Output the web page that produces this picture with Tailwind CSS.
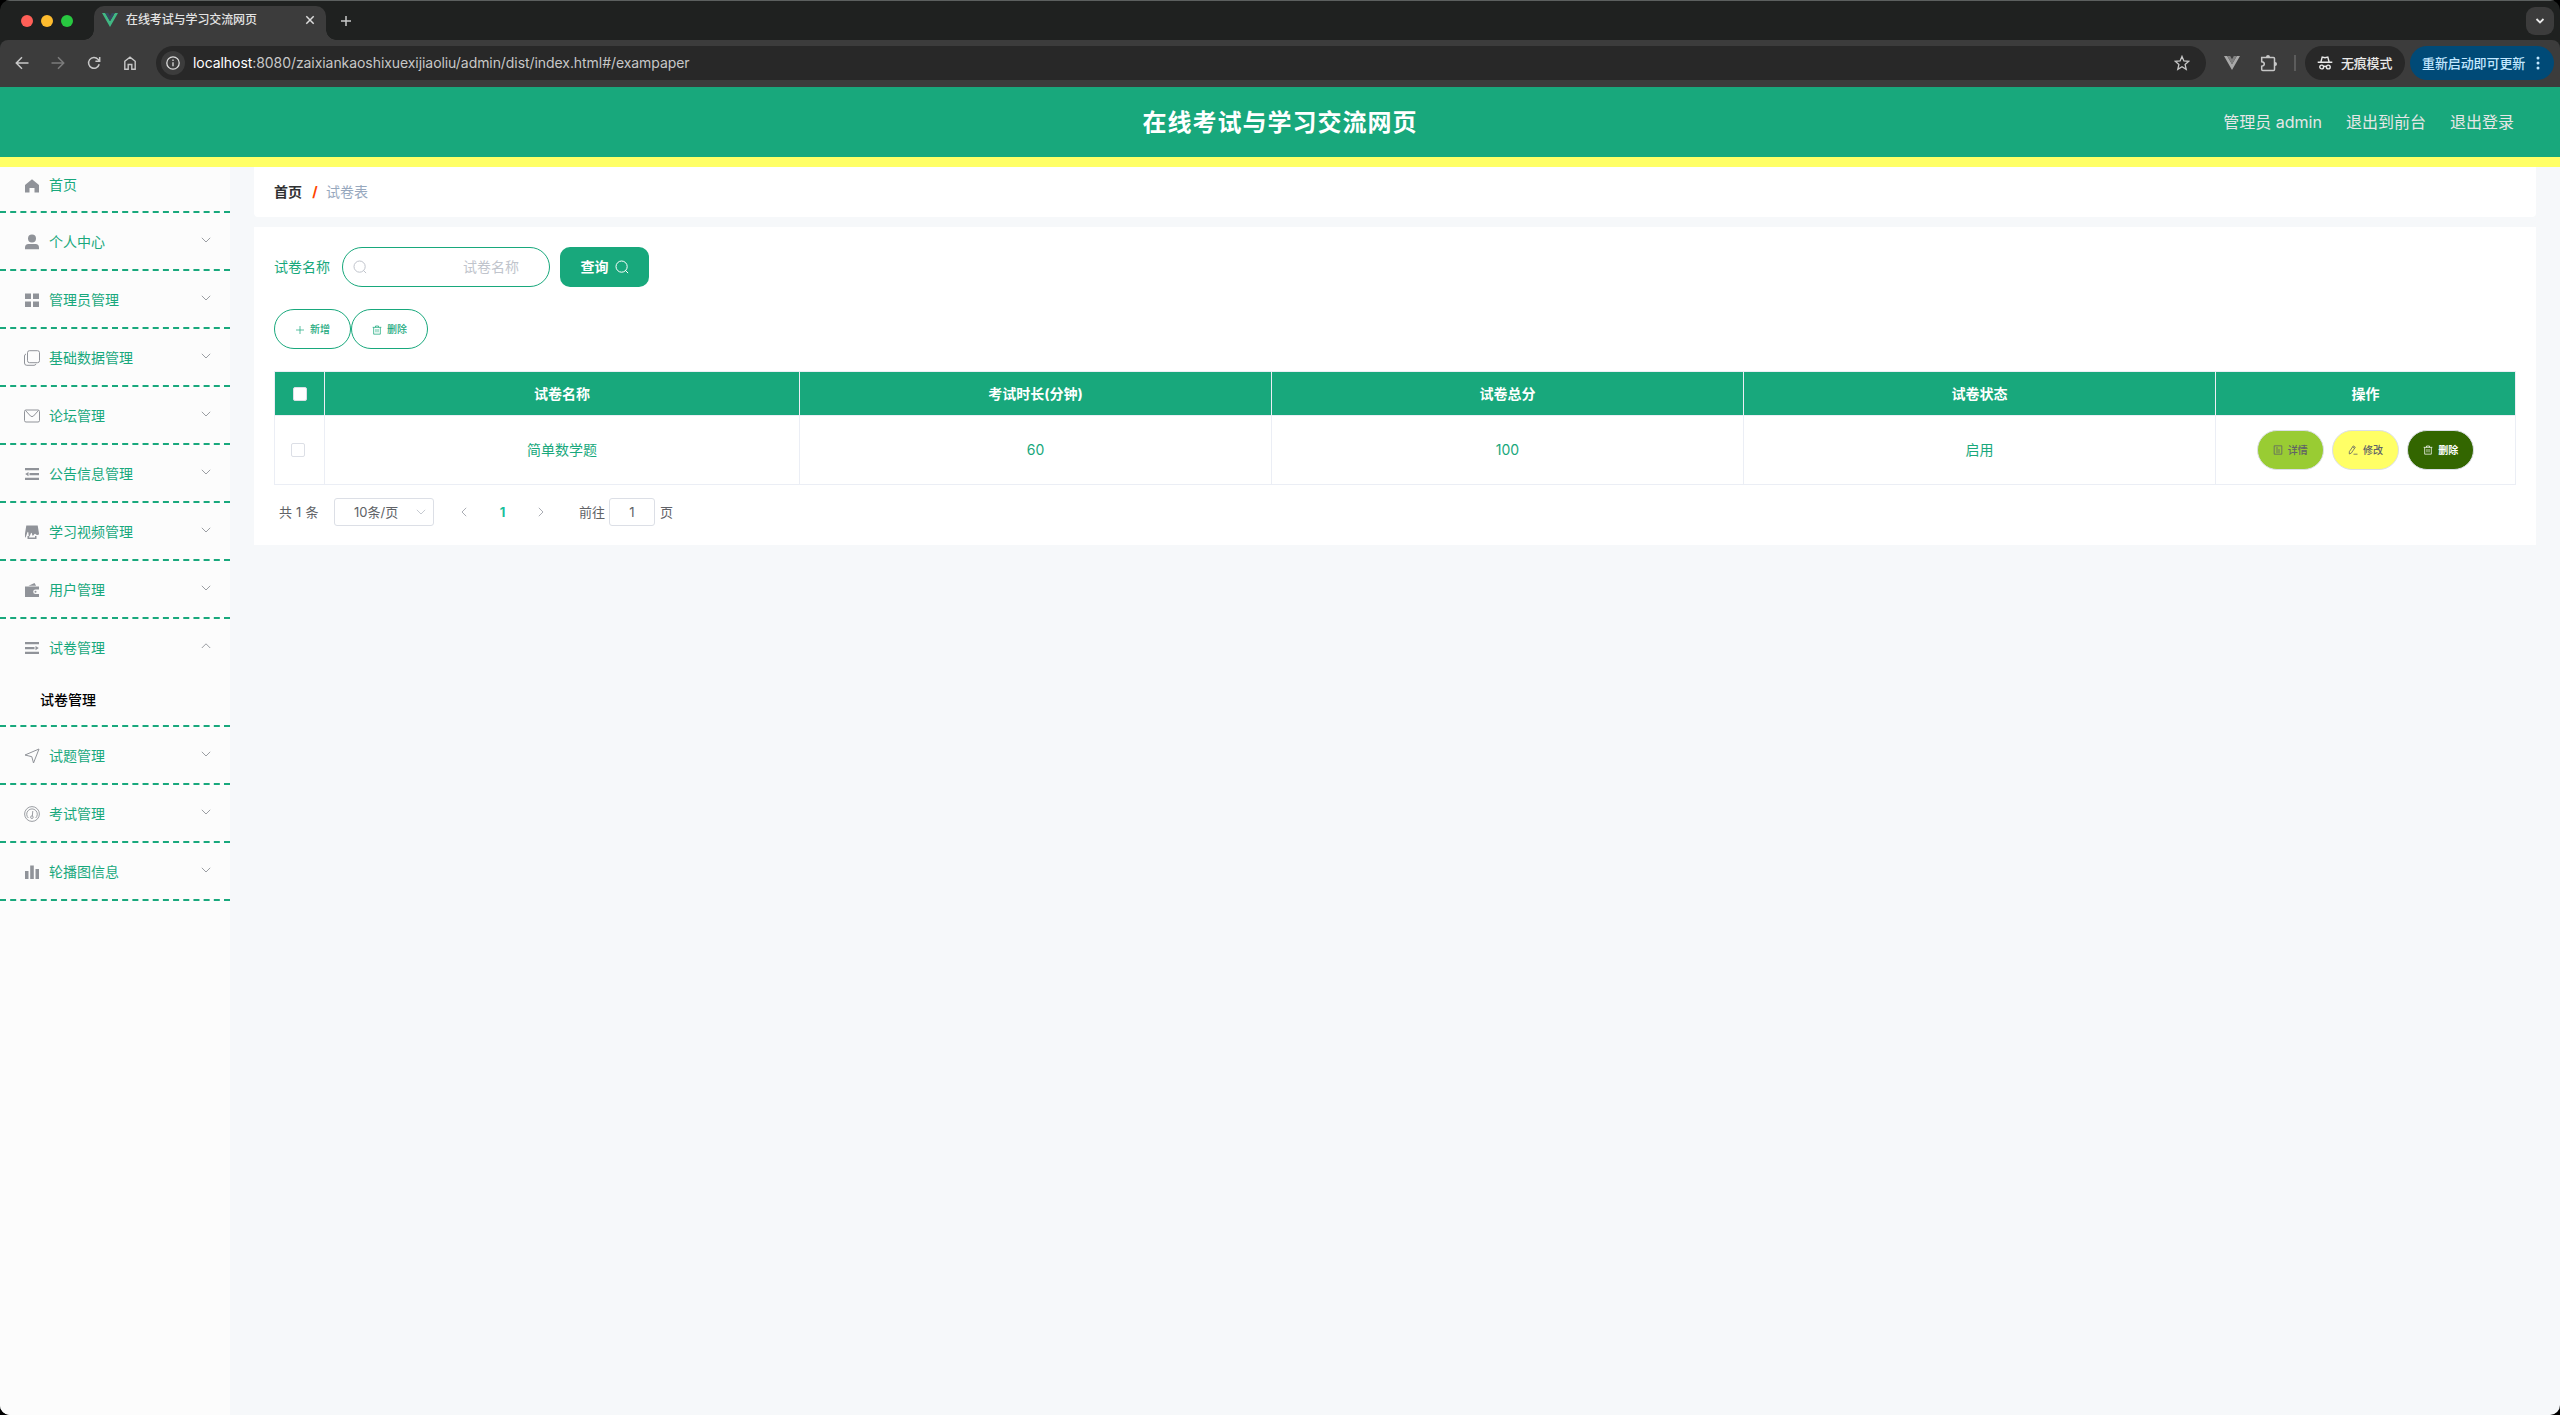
<!DOCTYPE html>
<html lang="zh-CN">
<head>
<meta charset="utf-8">
<title>在线考试与学习交流网页</title>
<script src="https://cdn.jsdelivr.net/npm/@tailwindcss/browser@4"></script>
</head>
<body class="w-[2560px] h-[1415px] overflow-hidden bg-black font-['Inter','Noto_Sans_CJK_SC',sans-serif] text-sm">
<svg class="hidden">
  <symbol id="down" viewBox="0 0 12 12"><path d="M1.8 3.8L6 8l4.2-4.2" fill="none" stroke="currentColor" stroke-width=".9"/></symbol>
  <symbol id="up" viewBox="0 0 12 12"><path d="M1.8 8L6 3.8 10.2 8" fill="none" stroke="currentColor" stroke-width=".9"/></symbol>
  <symbol id="search" viewBox="0 0 14 14"><g fill="none" stroke="currentColor" stroke-width="1"><circle cx="6.6" cy="6.6" r="5.6"/><path d="M10.200 10.200l2.900 2.900"/></g></symbol>
  <symbol id="trash" viewBox="0 0 12 12"><path d="M.8 2.800h10.400M4.200 2.800V1.200h3.600v1.600M2 2.800v8.200h8V2.800" fill="none" stroke="currentColor" stroke-width=".9"/><path d="M4.500 4.800v4M6 4.800v4M7.500 4.800v4" fill="none" stroke="currentColor" stroke-width=".6"/></symbol>
</svg>
<div class="flex h-[1415px] flex-col overflow-hidden rounded-[10px] bg-[#1f2120]">
  <!-- tab strip -->
  <div class="flex h-10 shrink-0 items-end border-t border-[#5c605f]">
    <div class="flex h-full w-[84px] items-center gap-2 pl-[21px]">
      <i class="size-3 rounded-full bg-[#ff5f57]"></i><i class="size-3 rounded-full bg-[#febc2e]"></i><i class="size-3 rounded-full bg-[#28c840]"></i>
    </div>
    <div class="size-[10px] bg-[radial-gradient(circle_at_0_0,transparent_9.5px,#3c3c3c_10px)]"></div>
    <div class="flex h-[34px] w-[232px] items-center rounded-t-[10px] bg-[#3c3c3c] pb-[6px] pl-2 pr-[11px]">
      <svg class="h-[14px] w-4" viewBox="0 0 16 14"><path d="M0 0h3.2L8 8.3 12.8 0H16L8 14z" fill="#41b883"/><path d="M3.2 0h3L8 3.2 9.800 0h3L8 8.300z" fill="#35495e"/></svg>
      <span class="ml-2 flex-1 text-[12px] font-medium leading-4 tracking-[-0.1px] text-[#e3e3e3]">在线考试与学习交流网页</span>
      <svg class="size-[10px]" viewBox="0 0 10 10"><path d="M1.300 1.300l7.400 7.400M8.700 1.300L1.300 8.700" stroke="#dcdcdc" stroke-width="1.500"/></svg>
    </div>
    <div class="size-[10px] bg-[radial-gradient(circle_at_100%_0,transparent_9.5px,#3c3c3c_10px)]"></div>
    <div class="flex h-full flex-1 items-center justify-between pl-[4px] pr-[6px]">
      <svg class="size-3" viewBox="0 0 12 12"><path d="M6 1v10M1 6h10" stroke="#c7c7c7" stroke-width="1.500"/></svg>
      <div class="flex size-7 items-center justify-center rounded-[9px] bg-[#3c3c3c]"><svg class="size-[10px]" viewBox="0 0 10 10"><path d="M1.500 3L5 6.500 8.500 3" fill="none" stroke="#e8e8e8" stroke-width="1.800"/></svg></div>
    </div>
  </div>
  <!-- toolbar -->
  <div class="flex h-[47px] shrink-0 items-center rounded-t-[8px] bg-[#3c3c3c] pb-px pl-[15px] pr-[6px]">
    <div class="flex w-[141px] items-center gap-[22px] text-[#c7c7c7]">
      <svg class="size-[14px]" viewBox="0 0 14 14"><path d="M13.500 7H1.500M7 1.300L1.300 7 7 12.700" fill="none" stroke="currentColor" stroke-width="1.500"/></svg>
      <svg class="size-[14px] text-[#7b7b7b]" viewBox="0 0 14 14"><path d="M.5 7h12M7 1.300L12.700 7 7 12.700" fill="none" stroke="currentColor" stroke-width="1.500"/></svg>
      <svg class="size-[14px]" viewBox="0 0 14 14"><path d="M12.200 8.300A5.400 5.400 0 1 1 11 3.300L12.500 4.800M12.700 1v4.300H8.400" fill="none" stroke="currentColor" stroke-width="1.500"/></svg>
      <svg class="size-[14px]" viewBox="0 0 14 14"><path d="M1.800 5.300L7 1.200l5.200 4.100v8H8.800V8.500H5.200v4.800H1.800z" fill="none" stroke="currentColor" stroke-width="1.400"/></svg>
    </div>
    <div class="flex h-[34px] flex-1 items-center rounded-full bg-[#282828] pl-[5px] pr-4">
      <div class="flex size-6 items-center justify-center rounded-full bg-[#3c3c3c]"><svg class="size-[14px]" viewBox="0 0 14 14"><g fill="none" stroke="#dcdcdc" stroke-width="1.300"><circle cx="7" cy="7" r="6.200"/><path d="M7 6.200v4M7 3.600v1.400"/></g></svg></div>
      <span class="ml-2 flex-1 text-[14px] leading-5 text-[#c7c7c7] tracking-[-0.065px]"><span class="text-white">localhost</span>:8080/zaixiankaoshixuexijiaoliu/admin/dist/index.html#/exampaper</span>
      <svg class="size-4" viewBox="0 0 16 16"><path d="M8 1.400l1.900 4.500 4.900.4-3.700 3.200 1.100 4.800L8 11.800l-4.200 2.500 1.100-4.800L1.200 6.300l4.900-.4z" fill="none" stroke="#c7c7c7" stroke-width="1.300"/></svg>
    </div>
    <svg class="ml-[18px] h-[14px] w-4" viewBox="0 0 16 14"><path d="M0 0h3.200L8 8.300 12.800 0H16L8 14z" fill="#a9a9a9"/><path d="M3.200 0h3L8 3.200 9.800 0h3L8 8.300z" fill="#808080"/></svg>
    <svg class="ml-5 size-[18px]" viewBox="0 0 18 18"><path d="M1.700 3.500h11.800q1 0 1 1v11q0 1-1 1H2.700q-1 0-1-1v-3.300q2.600-.4 2.600-2.200T1.700 7.800z" fill="none" stroke="#c7c7c7" stroke-width="1.500"/><path d="M6 3a2 2 0 0 1 4 0zM15 8a2 2 0 0 1 0 4z" fill="#c7c7c7"/></svg>
    <i class="ml-4 h-4 w-0.5 bg-[#5c5c5c]"></i>
    <div class="ml-[9px] flex h-[34px] w-[100px] items-center gap-2 rounded-full bg-[#282828] pl-3 text-[13px] font-medium text-[#e8e8e8]">
      <svg class="size-4 shrink-0" viewBox="0 0 16 16"><path d="M.7 7.300h14.600M3.900 7L5.200 2l2.800.7 2.800-.7L12.100 7M6.500 11.700q1.500-.8 3 0" fill="none" stroke="currentColor" stroke-width="1.400"/><g fill="none" stroke="currentColor" stroke-width="1.400"><circle cx="4.700" cy="12" r="1.900"/><circle cx="11.300" cy="12" r="1.900"/></g></svg>
      <span class="whitespace-nowrap tracking-[-0.2px]">无痕模式</span>
    </div>
    <div class="ml-[5px] flex h-[34px] w-[144px] items-center rounded-full bg-[#004a77] pl-3 text-[13px] font-medium text-[#c2e7ff]">
      <span class="whitespace-nowrap tracking-[-0.1px]">重新启动即可更新</span>
      <svg class="ml-[11px] h-4 w-1" viewBox="0 0 4 16"><g fill="currentColor"><circle cx="2" cy="3" r="1.500"/><circle cx="2" cy="8" r="1.500"/><circle cx="2" cy="13" r="1.500"/></g></svg>
    </div>
  </div>
  <!-- site header -->
  <div class="grid h-20 shrink-0 grid-cols-3 items-center border-b-[10px] border-[#ffff66] bg-[#18a87c]">
    <span></span>
    <h1 class="pt-[2px] text-center text-2xl font-bold leading-[68px] tracking-[1px] text-white">在线考试与学习交流网页</h1>
    <div class="flex justify-end gap-6 pr-[46px] text-base text-[#e6e6e6]"><span>管理员 admin</span><span>退出到前台</span><span>退出登录</span></div>
  </div>
  <div class="flex flex-1 bg-[#f6f8fa]">
    <!-- side menu -->
    <nav id="menu" class="w-[230px] shrink-0 bg-[#fcfcfc] text-[#18a87c]"></nav>
    <main class="flex flex-1 flex-col gap-[10px] pl-6 pr-6">
      <div class="flex h-[50px] items-center rounded-b bg-white pl-5"><b class="font-bold text-[#303133]">首页</b><span class="ml-[9px] mr-[7px] w-[8px] text-center font-bold text-[#ff4400]">/</span><span class="text-[#97a8be]">试卷表</span></div>
      <section class="h-[318px] bg-white px-5 pt-5">
        <div class="flex h-10 items-center">
          <span class="text-[#18a87c]">试卷名称</span>
          <div class="ml-3 flex h-10 w-[208px] items-center justify-between rounded-[20px] border border-[#18a87c] pl-[10px] pr-[30px] text-[#c0c4cc]"><svg class="size-[14px]"><use href="#search"/></svg><span>试卷名称</span></div>
          <div class="ml-[10px] flex h-10 w-[89px] items-center justify-center gap-1.5 rounded-[10px] bg-[#18a87c] font-bold text-white"><span>查询</span><svg class="size-[14px]"><use href="#search"/></svg></div>
        </div>
        <div class="mt-[22px] flex h-10 text-[10px] font-medium text-[#18a87c]">
          <div class="flex w-[77px] items-center justify-center gap-[5px] rounded-[20px] border border-[#18a87c] pt-px"><svg class="size-[10px]" viewBox="0 0 10 10"><path d="M5 1v8M1 5h8" stroke="currentColor" stroke-width=".7"/></svg>新增</div>
          <div class="flex w-[77px] items-center justify-center gap-[5px] rounded-[20px] border border-[#18a87c] pt-px"><svg class="size-[10px]"><use href="#trash"/></svg>删除</div>
        </div>
        <div class="mt-[22px] grid h-[114px] grid-cols-[50px_475px_472px_472px_472px_300px] grid-rows-[44px_69px] border-l border-t border-[#ebeef5] text-center text-[#18a87c] [&>*]:flex [&>*]:items-center [&>*]:justify-center [&>*]:border-b [&>*]:border-r [&>*]:border-[#ebeef5]">
          <div class="bg-[#18a87c]"><i class="size-[14px] rounded-[2px] border border-[#dcdfe6] bg-white"></i></div>
          <div class="bg-[#18a87c] font-bold text-white">试卷名称</div>
          <div class="bg-[#18a87c] font-bold text-white">考试时长(分钟)</div>
          <div class="bg-[#18a87c] font-bold text-white">试卷总分</div>
          <div class="bg-[#18a87c] font-bold text-white">试卷状态</div>
          <div class="bg-[#18a87c] font-bold text-white">操作</div>
          <div class="pr-1"><i class="size-[14px] rounded-[2px] border border-[#dcdfe6] bg-white"></i></div>
          <div>简单数学题</div>
          <div>60</div>
          <div>100</div>
          <div>启用</div>
          <div class="gap-[8.6px] text-[10px] font-medium text-[#606266]">
            <div class="flex h-10 w-[66.6px] items-center justify-center gap-[5px] rounded-[20px] border border-[#dcdfe6] bg-[#99cc33]"><svg class="size-[10px]" viewBox="0 0 10 10"><path d="M1.200.8h7.600v8.400H1.200zM3 3h2M3 5h4M3 7h4" fill="none" stroke="currentColor" stroke-width=".8"/></svg>详情</div>
            <div class="flex h-10 w-[66.6px] items-center justify-center gap-[5px] rounded-[20px] border border-[#dcdfe6] bg-[#ffff66]"><svg class="size-[10px]" viewBox="0 0 10 10"><path d="M1.300 9V6.700L5.300.9l2 1.300-4 5.900zM4.600 2l2 1.300M5.500 9.200h4" fill="none" stroke="currentColor" stroke-width=".8"/></svg>修改</div>
            <div class="flex h-10 w-[66.6px] items-center justify-center gap-[5px] rounded-[20px] border border-[#dcdfe6] bg-[#336600] font-bold text-white"><svg class="size-[10px]"><use href="#trash"/></svg>删除</div>
          </div>
        </div>
        <div class="flex h-[54px] items-center pl-[5px] text-[13px] text-[#606266]">
          <span class="w-[55px] tracking-[0.2px]">共 1 条</span>
          <div class="flex h-7 w-[100px] items-center justify-between rounded-[3px] border border-[#dcdfe6] pl-[19px] pr-[6px]">10条/页<svg class="size-3 text-[#c0c4cc]"><use href="#down"/></svg></div>
          <svg class="ml-6 size-3 rotate-90 text-[#a0a4ac]"><use href="#down"/></svg>
          <span class="w-[65px] text-center font-bold text-[#18c09c]">1</span>
          <svg class="size-3 -rotate-90 text-[#a0a4ac]"><use href="#down"/></svg>
          <span class="ml-[32px]">前往</span>
          <span class="ml-1 flex h-7 w-[46px] items-center justify-center rounded-[3px] border border-[#dcdfe6]">1</span>
          <span class="ml-[5px]">页</span>
        </div>
      </section>
    </main>
  </div>
</div>
<script>
const S = (d) => `<path d="${d}" fill="none" stroke="currentColor" stroke-width="1"/>`;
const F = (d) => `<path d="${d}" fill="currentColor" fill-rule="evenodd"/>`;
const items = [
  ['首页', F('M8 1.200L15 7v7.500h-4.500V10h-5v4.500H1V7z')],
  ['个人中心', F('M8 .5a4 4 0 1 1 0 8 4 4 0 0 1 0-8zM1 15.200v-1.500Q1 10 4.500 10h7Q15 10 15 13.700v1.500z')],
  ['管理员管理', F('M1 1.500h6v5.500H1zM9 1.500h6v5.500H9zM1 9.500h6V15H1zM9 9.500h6V15H9z')],
  ['基础数据管理', S('M5.500.7h8q2 0 2 2v8q0 2-2 2h-8q-2 0-2-2v-8q0-2 2-2zM2 4Q.5 4.500.5 6v7q0 2.300 2.300 2.300H10q1.700 0 2-1.500')],
  ['论坛管理', S('M2 2h12q1.500 0 1.500 1.500v9Q15.500 14 14 14H2Q.5 14 .5 12.500v-9Q.5 2 2 2zM1.500 2.500L6.500 8q1.500 1.300 3 0l5-5.500')],
  ['公告信息管理', F('M1 2h14v2.200H1zM5.500 7h9.500v2.200H5.500zM1 11.800h14v2.200H1zM4.500 6v4.200L1.200 8.100z')],
  ['学习视频管理', F('M2.300 1.500h11.400L15 9.500q0 1.500-1.500 1.500T11.500 10 9.700 11 8 10 6.200 11 4.500 10 2.500 11 1 9.500zM3.500 12h1.500v1.500h6V12h1.500v3h-9z')],
  ['用户管理', F('M1 4.500h14v3h-3.500a2.300 2.300 0 0 0 0 4.600H15V15H1zM4.500 3.800L10.500.9l1.600 2.900zM11.500 8.800a1 1 0 1 1 0 2 1 1 0 0 1 0-2z')],
  ['试卷管理', F('M1 2h14v2.200H1zM1 7h9.500v2.200H1zM1 11.800h14v2.200H1zM11.500 6v4.200l3.300-2.100z'), '试卷管理'],
  ['试题管理', S('M15 1L1 7l6.800 1.700L9.500 15z')],
  ['考试管理', `<g fill="none" stroke="currentColor" stroke-width=".9"><circle cx="8" cy="8" r="7.400"/><path d="M4.300 12A5.300 5.300 0 1 1 11.700 12M8.800 5L8.300 10"/><circle cx="7.900" cy="11.200" r="1.300"/></g>`],
  ['轮播图信息', F('M1 7h3.500v8H1zM6.200 1.500h3.600V15H6.200zM11.500 5H15v10h-3.500z')],
];
document.getElementById('menu').innerHTML = items.map(([name, icon, sub], i) => `
  <div class="border-b-2 border-dashed border-[#18a87c]">
    <div class="flex items-center pl-6 pr-[18px] ${i ? 'h-14 pt-[2px]' : 'h-11 pb-[8px]'}">
      <svg class="size-4 shrink-0 text-[#909399] ${i ? '' : 'mt-px'}" viewBox="0 0 16 16">${icon}</svg>
      <span class="ml-[9px] flex-1">${name}</span>
      ${i ? `<svg class="mb-[5px] size-3 text-[#909399]"><use href="#${sub ? 'up' : 'down'}"/></svg>` : ''}
    </div>
    ${sub ? `<div class="flex h-[50px] items-center pl-10 text-black font-medium">${sub}</div>` : ''}
  </div>`).join('');
</script>
</body>
</html>
